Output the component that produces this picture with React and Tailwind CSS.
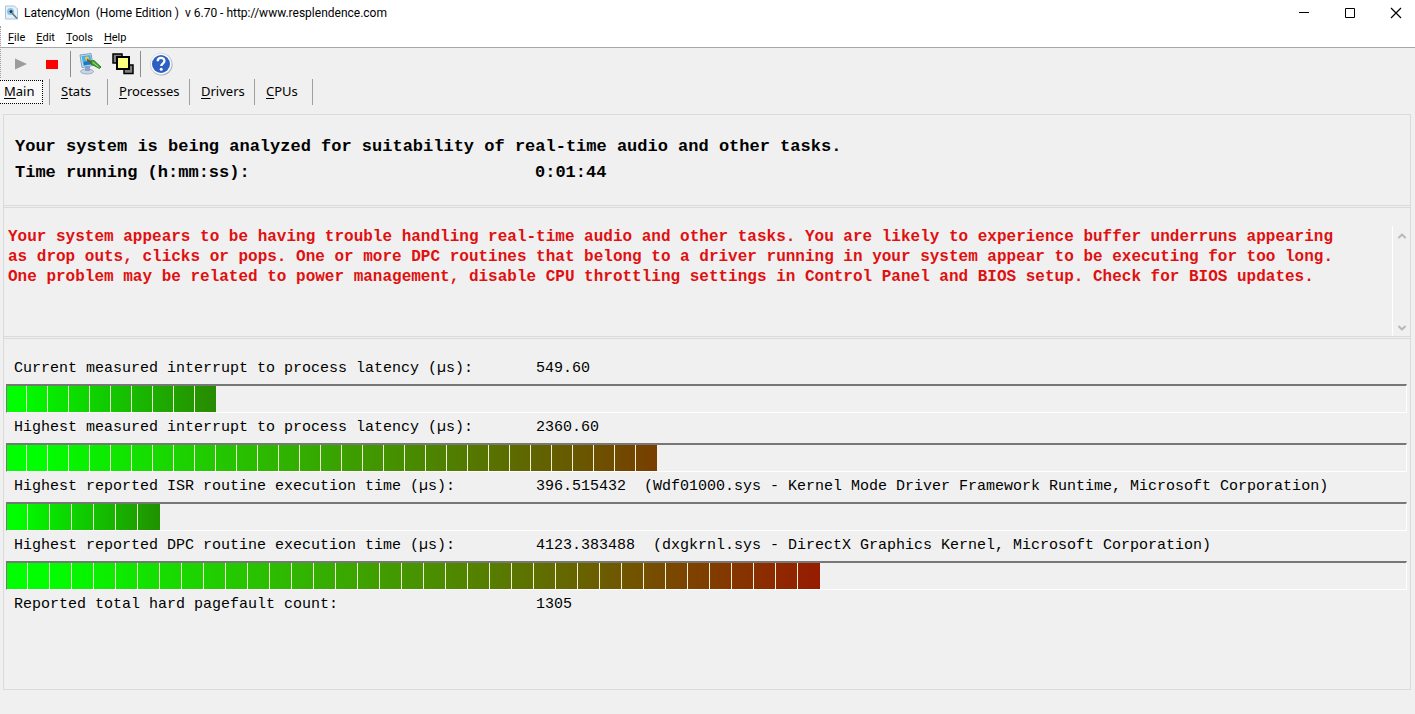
import React from 'react';
import { ChevronUp, ChevronDown } from 'lucide-react';

const menus = ['File', 'Edit', 'Tools', 'Help'];

const tabs = [
  { name: 'Stats', width: 'w-[58px]' },
  { name: 'Processes', width: 'w-[82px]' },
  { name: 'Drivers', width: 'w-[65px]' },
  { name: 'CPUs', width: 'w-[58px]' }
];

// pitch is the width of one block plus its separator line
const readings = [
  { id: 'current', label: 'Current measured interrupt to process latency (µs):', value: '549.60', blocks: 10, pitch: 21, end: [40, 138, 0] },
  { id: 'highest', label: 'Highest measured interrupt to process latency (µs):', value: '2360.60', blocks: 31, pitch: 21, end: [120, 62, 0] },
  { id: 'isr', label: 'Highest reported ISR routine execution time (µs):', value: '396.515432', detail: '(Wdf01000.sys - Kernel Mode Driver Framework Runtime, Microsoft Corporation)', blocks: 7, pitch: 22, end: [33, 145, 0] },
  { id: 'dpc', label: 'Highest reported DPC routine execution time (µs):', value: '4123.383488', detail: '(dxgkrnl.sys - DirectX Graphics Kernel, Microsoft Corporation)', blocks: 37, pitch: 22, end: [150, 28, 0] }
];

const AccessLabel = ({ text }) => (
  <span>
    <span className="underline underline-offset-2">{text[0]}</span>
    {text.slice(1)}
  </span>
);

const Meter = ({ blocks, pitch, end }) => {
  const width = blocks * pitch - 1;
  const colour = `rgb(${end.join(',')})`;
  return (
    <div className="mb-px h-[29px] border-t-2 border-r border-b border-l border-t-[#777] border-l-[#777] border-r-white border-b-white">
      <div
        className="h-full"
        style={{
          width,
          backgroundImage: `repeating-linear-gradient(90deg, transparent 0 ${pitch - 1}px, #f2f2d8 ${pitch - 1}px ${pitch}px), linear-gradient(90deg, #00ff00, #00ff00 5%, ${colour})`,
          backgroundPosition: '-1px 0, 0 0',
          backgroundSize: `${width}px 100%, 100% 100%`,
          backgroundRepeat: 'no-repeat'
        }}
      />
    </div>
  );
};

const TitleBar = () => (
  <header className="flex h-[26px] items-center bg-white">
    <svg className="ml-1 h-4 w-4" viewBox="0 0 16 16">
      <path d="M1.5 1h9l3 3v10h-12z" fill="#e4f0fa" stroke="#a9c3db" />
      <circle cx="6.5" cy="6.5" r="3.5" fill="#8fc0de" />
      <circle cx="7" cy="6.5" r="1.500" fill="#163b5c" />
      <path d="M8 8l5 5.500" stroke="#5c7083" strokeWidth="1.500" />
    </svg>
    <h1 className="ml-1 font-['Roboto',sans-serif] text-xs whitespace-pre">LatencyMon  (Home Edition )  v 6.70 - http://www.resplendence.com</h1>
    <div className="ml-auto flex items-center gap-2">
      <button aria-label="Minimize" className="flex h-6 w-[38px] items-center justify-center">
        <svg className="h-3 w-3" viewBox="0 0 12 12"><path d="M1 5.500h10" stroke="#000" /></svg>
      </button>
      <button aria-label="Maximize" className="flex h-6 w-[38px] items-center justify-center">
        <svg className="h-3 w-3" viewBox="0 0 12 12"><path d="M1.500 1.500h9v9h-9z" fill="none" stroke="#000" /></svg>
      </button>
      <button aria-label="Close" className="flex h-6 w-[38px] items-center justify-center">
        <svg className="h-3 w-3" viewBox="0 0 12 12"><path d="M1 1l10 10M11 1L1 11" stroke="#000" strokeWidth="1.200" /></svg>
      </button>
    </div>
  </header>
);

const ToolBar = () => (
  <div className="flex h-[30px] items-center pt-0.5 pl-[5px]">
    <button aria-label="Start" className="flex h-7 w-[30px] items-center justify-center">
      <svg className="h-3 w-3" viewBox="0 0 12 12"><path d="M0 0.500L12 6L0 11.500z" fill="#9c9c9c" /></svg>
    </button>
    <button aria-label="Stop" className="mr-0.5 flex h-7 w-8 items-center justify-center">
      <svg className="h-[9px] w-3" viewBox="0 0 12 9"><path d="M0 0h12v9H0z" fill="#f00" /></svg>
    </button>
    <div className="h-[26px] w-px bg-[#8c8c8c]" />
    <button aria-label="Options" className="flex h-7 w-[37px] items-center justify-center">
      <svg className="h-6 w-6" viewBox="0 0 24 24">
        <ellipse cx="9" cy="19.500" rx="6.500" ry="2.500" fill="#c9d4ea" stroke="#8795b5" strokeWidth=".7" />
        <path d="M7 14h5v5H7z" fill="#8fa3c9" />
        <path d="M2 3l11-1.500 2 12L4 15.500z" fill="#cfe2f3" stroke="#819cb9" />
        <path d="M3.500 4l8.800-1 1.700 9.500L5.500 14z" fill="#43b4e8" />
        <path d="M5.500 10l7-1.500.8 3.800-7.300 1z" fill="#2476c2" />
        <circle cx="9" cy="6.500" r="2" fill="#f3c44a" />
        <path d="M9 6.500l6 4-1 2-5-4z" fill="#785e20" />
        <path d="M13 9l3-.5 7 6.500-1.500 1.500L13 12z" fill="#42a82f" stroke="#1c6519" strokeWidth=".8" />
        <path d="M14.500 10l6 5" stroke="#a3e27e" />
      </svg>
    </button>
    <button aria-label="Processes on top" className="mr-0.5 flex h-7 w-[30px] items-center justify-center">
      <svg className="h-[22px] w-[22px]" viewBox="0 0 22 22">
        <path d="M1 1h9v9H1zM12 12h9v8.500h-9z" fill="#808080" stroke="#000" strokeWidth="1.500" />
        <path d="M5 4h12v12H5z" fill="#ffff80" stroke="#000" strokeWidth="2" />
      </svg>
    </button>
    <div className="h-[26px] w-px bg-[#8c8c8c]" />
    <button aria-label="Help" className="flex h-7 w-10 items-center justify-center">
      <svg className="h-6 w-6" viewBox="0 0 24 24">
        <circle cx="12.500" cy="12.500" r="11" fill="#9da6b6" />
        <circle cx="12" cy="12" r="10.700" fill="#fff" stroke="#c5cbd8" strokeWidth=".6" />
        <circle cx="12" cy="12" r="9" fill="#2e60c4" />
        <path d="M8.700 9.300c0-4.500 6.700-4.300 6.700-.4 0 2.600-3.200 2.700-3.200 5.200" fill="none" stroke="#fff" strokeWidth="2.300" />
        <circle cx="12.200" cy="17.200" r="1.500" fill="#fff" />
      </svg>
    </button>
  </div>
);

const Tabs = () => (
  <nav className="flex h-7 items-center text-[13px]">
    <button className="h-6 w-[43px] border border-l-0 border-dotted border-black bg-[#f8f8f8] pl-1 text-left">
      <AccessLabel text="Main" />
    </button>
    <div className="ml-1.5 h-[26px] w-px bg-[#a0a0a0]" />
    {tabs.map((tab) => (
      <button key={tab.name} className={`h-[26px] border-r border-[#a0a0a0] pl-[11px] text-left ${tab.width}`}>
        <AccessLabel text={tab.name} />
      </button>
    ))}
  </nav>
);

export default function App() {
  return (
    <div className="flex min-h-screen flex-col bg-[#f0f0f0] font-['Noto_Sans',sans-serif] text-black">
      <TitleBar />
      <div className="border-l border-dotted border-[#a0a0a0]">
        <nav className="flex h-[22px] items-center gap-[11px] border-b border-[#a8a8a8] bg-white pt-1 pl-[7px] font-['Roboto',sans-serif] text-[11px]">
          {menus.map((menu) => (
            <button key={menu}><AccessLabel text={menu} /></button>
          ))}
        </nav>
        <ToolBar />
      </div>
      <Tabs />

      <main className="mt-2 mr-1 mb-6 ml-[3px] flex grow flex-col border border-[#dadada] font-['Liberation_Mono',monospace]">
        <section className="h-[91px] border-b border-[#dadada] pt-[19px] pl-[11px] text-[17px] leading-[26px] font-bold">
          <p>Your system is being analyzed for suitability of real-time audio and other tasks.</p>
          <div className="flex">
            <p className="w-[520px]">Time running (h:mm:ss):</p>
            <p>0:01:44</p>
          </div>
        </section>

        {/* Conclusion text */}
        <section className="mt-px flex h-[130px] border-y border-[#dadada]">
          <p className="mt-[19px] grow pl-1 text-base leading-5 font-bold text-[#e01010]">
            Your system appears to be having trouble handling real-time audio and other tasks. You are likely to experience buffer underruns appearing<br />
            as drop outs, clicks or pops. One or more DPC routines that belong to a driver running in your system appear to be executing for too long.<br />
            One problem may be related to power management, disable CPU throttling settings in Control Panel and BIOS setup. Check for BIOS updates.
          </p>
          <div className="mt-[18px] flex w-[18px] shrink-0 flex-col items-center justify-between border-l border-white pt-1 pb-0.5 text-[#b8b8b8]">
            <button aria-label="Scroll up"><ChevronUp size={12} strokeWidth={4} /></button>
            <button aria-label="Scroll down"><ChevronDown size={12} strokeWidth={4} /></button>
          </div>
        </section>

        <section className="mt-px border-t border-[#dadada] pt-4 pr-[3px] pl-0.5 text-[15px]">
          {readings.map((reading) => (
            <div key={reading.id}>
              <div className="flex h-[29px] items-center pl-2">
                <p className="w-[522px]">{reading.label}</p>
                <p className="whitespace-pre">{reading.value}{reading.detail ? `  ${reading.detail}` : ''}</p>
              </div>
              <Meter blocks={reading.blocks} pitch={reading.pitch} end={reading.end} />
            </div>
          ))}
          <div className="flex h-[29px] items-center pl-2">
            <p className="w-[522px]">Reported total hard pagefault count:</p>
            <p>1305</p>
          </div>
        </section>
      </main>
    </div>
  );
}
